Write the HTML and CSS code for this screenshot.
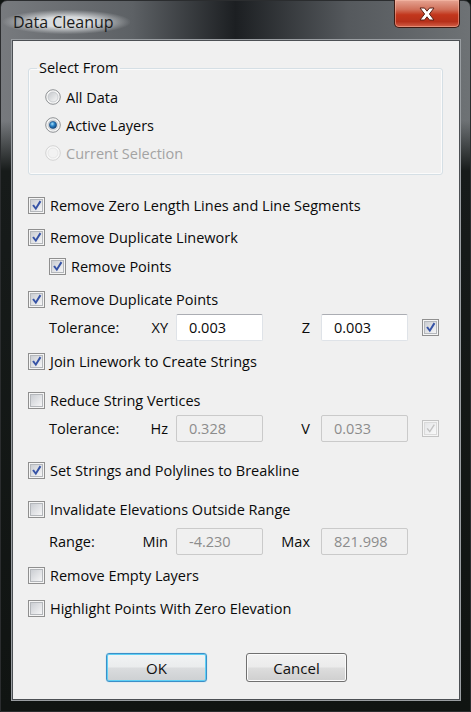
FILE: index.html
```html
<!DOCTYPE html>
<html>
<head lang="en">
    <meta charset="UTF-8">
    <title>Data Cleanup</title>
    <link rel="stylesheet" href="styles.css">
</head>
<body>
<svg class="defs" width="0" height="0">
    <defs>
        <linearGradient id="boxFill" x1="0" y1="0" x2="1" y2="1">
            <stop offset="0" stop-color="#c9ccd1"/>
            <stop offset="1" stop-color="#f7f7f8"/>
        </linearGradient>
        <linearGradient id="boxFillOff" x1="0" y1="0" x2="1" y2="1">
            <stop offset="0" stop-color="#e4e5e7"/>
            <stop offset="1" stop-color="#fafafa"/>
        </linearGradient>
        <linearGradient id="ringFill" x1="0" y1="0" x2="1" y2="1">
            <stop offset="0" stop-color="#c4c7cb"/>
            <stop offset="1" stop-color="#f8f8f8"/>
        </linearGradient>
        <radialGradient id="dotFill" cx="0.4" cy="0.35" r="0.7">
            <stop offset="0" stop-color="#a6e0fb"/>
            <stop offset="0.45" stop-color="#2a82c6"/>
            <stop offset="1" stop-color="#0d3e74"/>
        </radialGradient>
        <symbol id="cb-off" viewBox="0 0 17 17">
            <rect x="0.5" y="0.5" width="16" height="16" fill="#f5f5f5" stroke="#8f8f8f"/>
            <rect x="2.5" y="2.5" width="12" height="12" fill="url(#boxFill)" stroke="#b4b7bb"/>
        </symbol>
        <symbol id="cb-on" viewBox="0 0 17 17">
            <rect x="0.5" y="0.5" width="16" height="16" fill="#f5f5f5" stroke="#8f8f8f"/>
            <rect x="2.5" y="2.5" width="12" height="12" fill="url(#boxFill)" stroke="#b4b7bb"/>
            <path d="M4.2 8.6 L5.9 7.4 L7.7 10 L11.6 3.6 L13.3 4.7 L7.9 13.2 Z" fill="#3653a6"/>
        </symbol>
        <symbol id="cb-dis" viewBox="0 0 17 17">
            <rect x="0.5" y="0.5" width="16" height="16" fill="#f5f5f5" stroke="#c3c3c3"/>
            <rect x="2.5" y="2.5" width="12" height="12" fill="url(#boxFillOff)" stroke="#dadada"/>
            <path d="M4.6 8.8 L5.8 8 L7.7 10.6 L11.7 4.3 L12.9 5.1 L7.8 12.8 Z" fill="#c2c2c2"/>
        </symbol>
        <symbol id="rb-off" viewBox="0 0 16 16">
            <circle cx="8" cy="8" r="7.3" fill="#f6f6f6" stroke="#8e9194"/>
            <circle cx="8" cy="8" r="5" fill="url(#ringFill)" stroke="#c2c5c9" stroke-width="0.8"/>
        </symbol>
        <symbol id="rb-on" viewBox="0 0 16 16">
            <circle cx="8" cy="8" r="7.3" fill="#f6f6f6" stroke="#8e9194"/>
            <circle cx="8" cy="8" r="5" fill="url(#ringFill)" stroke="#c2c5c9" stroke-width="0.8"/>
            <circle cx="8" cy="8" r="3.6" fill="url(#dotFill)" stroke="#1b4a7d" stroke-width="0.6"/>
        </symbol>
        <symbol id="rb-dis" viewBox="0 0 16 16">
            <circle cx="8" cy="8" r="7.3" fill="#f7f7f7" stroke="#d3d3d3"/>
            <circle cx="8" cy="8" r="5" fill="#f2f2f2" stroke="#e2e2e2" stroke-width="0.8"/>
        </symbol>
    </defs>
</svg>

<div class="window">
    <div class="titlebar">
        <span class="title">Data Cleanup</span>
        <div class="close">
            <svg width="20" height="14" viewBox="0 0 20 14">
                <path d="M3 1 L7.5 1 L10 4.2 L12.5 1 L17 1 L12.4 7 L17 13 L12.5 13 L10 9.8 L7.5 13 L3 13 L7.6 7 Z" fill="#fff" stroke="#5a2116" stroke-width="1"/>
            </svg>
        </div>
    </div>

    <div class="client">
        <fieldset class="group">
            <legend>Select From</legend>
            <div class="radio-row"><svg class="rb"><use href="#rb-off"/></svg>All Data</div>
            <div class="radio-row"><svg class="rb"><use href="#rb-on"/></svg>Active Layers</div>
            <div class="radio-row disabled"><svg class="rb"><use href="#rb-dis"/></svg>Current Selection</div>
        </fieldset>

        <div class="row mt18"><svg class="cb"><use href="#cb-on"/></svg>Remove Zero Length Lines and Line Segments</div>
        <div class="row mt8"><svg class="cb"><use href="#cb-on"/></svg>Remove Duplicate Linework</div>
        <div class="row sub mt5"><svg class="cb"><use href="#cb-on"/></svg>Remove Points</div>
        <div class="row mt9"><svg class="cb"><use href="#cb-on"/></svg>Remove Duplicate Points</div>
        <div class="fields mt2">
            <span class="lbl">Tolerance:</span>
            <span class="key1">XY</span>
            <span class="box">0.003</span>
            <span class="key2">Z</span>
            <span class="box">0.003</span>
            <svg class="cb"><use href="#cb-on"/></svg>
        </div>
        <div class="row mt8"><svg class="cb"><use href="#cb-on"/></svg>Join Linework to Create Strings</div>
        <div class="row mt15"><svg class="cb"><use href="#cb-off"/></svg>Reduce String Vertices</div>
        <div class="fields mt2">
            <span class="lbl">Tolerance:</span>
            <span class="key1">Hz</span>
            <span class="box off">0.328</span>
            <span class="key2">V</span>
            <span class="box off">0.033</span>
            <svg class="cb"><use href="#cb-dis"/></svg>
        </div>
        <div class="row mt16"><svg class="cb"><use href="#cb-on"/></svg>Set Strings and Polylines to Breakline</div>
        <div class="row mt15"><svg class="cb"><use href="#cb-off"/></svg>Invalidate Elevations Outside Range</div>
        <div class="fields mt6">
            <span class="lbl">Range:</span>
            <span class="key1">Min</span>
            <span class="box off">-4.230</span>
            <span class="key2">Max</span>
            <span class="box off">821.998</span>
        </div>
        <div class="row mt8"><svg class="cb"><use href="#cb-off"/></svg>Remove Empty Layers</div>
        <div class="row mt9"><svg class="cb"><use href="#cb-off"/></svg>Highlight Points With Zero Elevation</div>

        <div class="buttons">
            <button class="btn default">OK</button>
            <button class="btn">Cancel</button>
        </div>
    </div>
</div>
</body>
</html>
```

FILE: styles.css
```css
* {
    margin: 0;
    padding: 0;
    box-sizing: border-box;
}
body {
    background: #0f1412;
    font-family: "Open Sans", "Noto Sans", sans-serif;
    font-size: 14.5px;
    color: #0a0a0a;
}
.defs {
    position: absolute;
}
.window {
    width: 471px;
    height: 712px;
    padding: 0 10px 11px 11px;
    border: 1px solid #2b2d2f;
    border-radius: 7px 7px 0 0;
    background:
        linear-gradient(180deg, rgba(0, 0, 0, 0) 0, rgba(0, 0, 0, 0) 120px, #171b1a 170px, #101412 100%),
        linear-gradient(90deg, #777a7e 0%, #5d6165 28%, #1c1f22 50%, #55595d 74%, #6e7275 100%);
    display: flex;
    flex-direction: column;
}
.titlebar {
    height: 39px;
    display: flex;
    justify-content: space-between;
    align-items: flex-start;
}
.title {
    margin: 9px 0 0 -9px;
    padding: 0 16px 0 10px;
    font-size: 16px;
    line-height: 24px;
    color: #1a1a1a;
    background: radial-gradient(ellipse at center, rgba(235, 238, 240, 0.85) 30%, rgba(235, 238, 240, 0) 72%);
}
.close {
    width: 66px;
    height: 28px;
    margin-top: -1px;
    border: 1px solid #3e1a12;
    border-top: none;
    border-radius: 0 0 5px 5px;
    background: linear-gradient(180deg, #e6a493 0%, #d0705a 35%, #c2361c 55%, #b6301a 80%, #d4624a 100%);
    box-shadow: inset 0 0 0 1px rgba(255, 200, 180, 0.45);
    display: flex;
    align-items: center;
    justify-content: center;
}
.client {
    flex: 1;
    background: #f0f0f0;
    border: 1px solid #4c5054;
    box-shadow: 0 0 0 1px #9a9ea2;
    padding: 0 15px;
}
.group {
    margin: 17px 1px 0 0;
    border: 1px solid #d5dfe5;
    border-radius: 3px;
    padding: 5px 16px 7px 16px;
    box-shadow: inset 0 0 0 1px #fbfbfb;
}
.group legend {
    margin-left: -8px;
    padding: 0 2px;
    line-height: 20px;
}
.radio-row {
    height: 28px;
    display: flex;
    align-items: center;
    gap: 5px;
}
.radio-row.disabled {
    color: #a3a3a3;
}
.rb {
    width: 16px;
    height: 16px;
}
.cb {
    width: 17px;
    height: 17px;
    flex: none;
}
.row {
    height: 24px;
    display: flex;
    align-items: center;
    gap: 5px;
}
.row.sub {
    padding-left: 21px;
}
.fields {
    height: 28px;
    padding-left: 21px;
    display: flex;
    align-items: center;
}
.lbl {
    width: 90px;
}
.key1 {
    width: 29px;
    text-align: right;
    margin-right: 8px;
}
.key2 {
    width: 47px;
    text-align: right;
    margin-right: 11px;
}
.box {
    width: 87px;
    height: 27px;
    padding-left: 12px;
    line-height: 25px;
    background: #fff;
    border: 1px solid #dfe3e8;
    border-top-color: #abadb3;
    border-radius: 2px;
}
.box.off {
    background: #f0f0f0;
    border-color: #cacaca;
    color: #8c8c8c;
}
.fields .cb {
    margin-left: 14px;
}
.mt2 { margin-top: 2px; }
.mt5 { margin-top: 5px; }
.mt6 { margin-top: 6px; }
.mt8 { margin-top: 8px; }
.mt9 { margin-top: 9px; }
.mt15 { margin-top: 15px; }
.mt16 { margin-top: 16px; }
.mt18 { margin-top: 18px; }
.buttons {
    margin-top: 33px;
    padding-left: 78px;
    display: flex;
    gap: 39px;
}
.btn {
    width: 101px;
    height: 29px;
    font-family: inherit;
    font-size: 15px;
    color: #111;
    border: 1px solid #707070;
    border-radius: 3px;
    background: linear-gradient(180deg, #f2f2f2 0%, #ebebeb 48%, #dddddd 52%, #cfcfcf 100%);
    box-shadow: inset 0 0 0 1px #fbfbfb;
}
.btn.default {
    border-color: #3c8fc8;
    background: linear-gradient(180deg, #f2f4f5 0%, #eaeced 48%, #dadcde 52%, #cdd0d2 100%);
    box-shadow: inset 0 0 0 1px #5fd0f5, 0 0 1px #60c4f0;
}
```
